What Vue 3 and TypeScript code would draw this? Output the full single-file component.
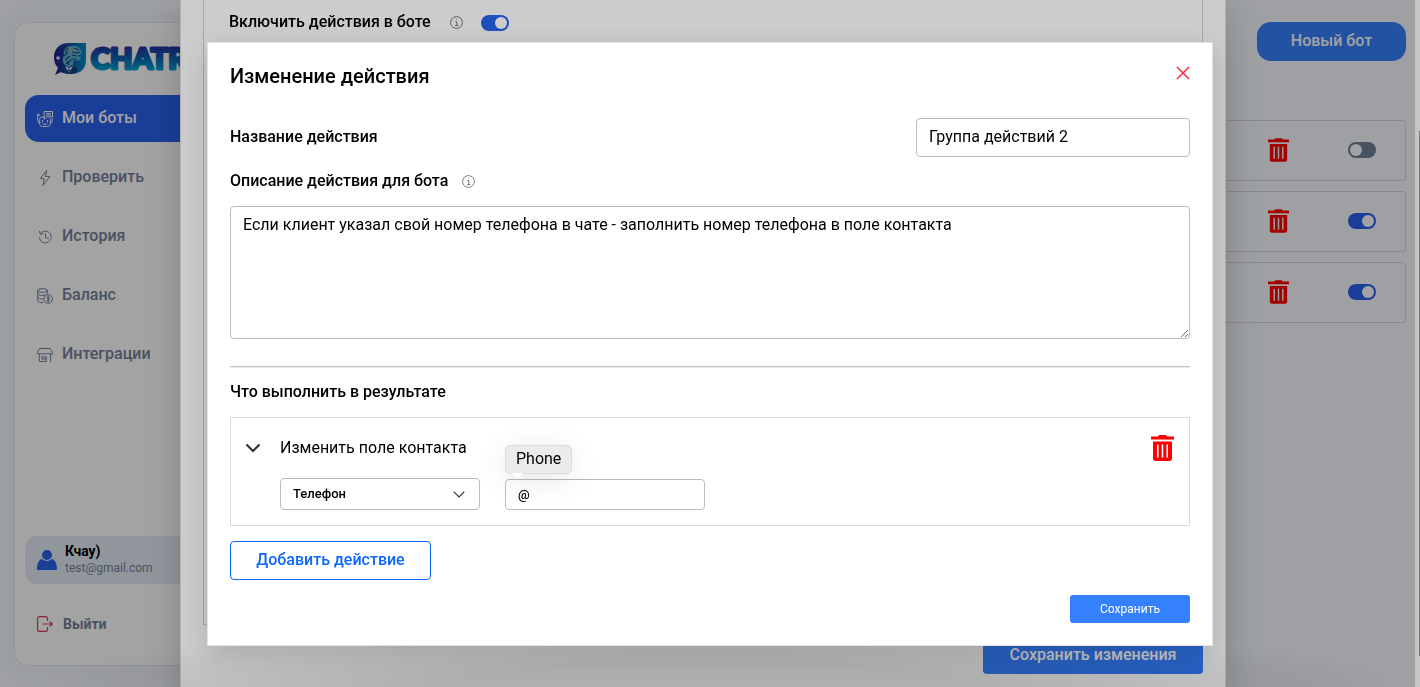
<script setup lang="ts">
import { ref } from 'vue'

interface NavItem {
  label: string
  icon: string
  active?: boolean
}

const nav: NavItem[] = [
  { label: 'Мои боты', icon: 'bot', active: true },
  { label: 'Проверить', icon: 'bolt' },
  { label: 'История', icon: 'history' },
  { label: 'Баланс', icon: 'coins' },
  { label: 'Интеграции', icon: 'store' },
]

const bots = ref<boolean[]>([false, true, true])
const actionsEnabled = ref(true)
const actionName = ref('Группа действий 2')
const description = ref('Если клиент указал свой номер телефона в чате - заполнить номер телефона в поле контакта')
const field = ref('Телефон')
const fieldValue = ref('@')
</script>

<template>
  <div class="page">
    <aside class="sidebar">
      <svg class="logo" width="190" height="36" viewBox="0 0 190 36" aria-label="CHATR">
        <defs>
          <linearGradient id="word" x1="0" y1="0" x2="0" y2="1">
            <stop offset=".15" stop-color="#2b2ca0" />
            <stop offset=".5" stop-color="#0a62b0" />
            <stop offset=".85" stop-color="#00a0d4" />
          </linearGradient>
          <linearGradient id="mark" x1="0" y1="0" x2="1" y2="0">
            <stop offset="0" stop-color="#2a1a86" />
            <stop offset=".5" stop-color="#1250a4" />
            <stop offset="1" stop-color="#0092c8" />
          </linearGradient>
        </defs>
        <path d="M15 2H33V19C33 28 27 33 18 33C14 33 10 32 8 31L2 34L5 27C2 24 1 20 1 16C1 8 7 2 15 2Z" fill="url(#mark)" />
        <path d="M11 14C10 8 14 5 19 5C23 4 26 6 28 9L29 13L23 15L28 16C28 19 25 20 21 19L20 21V25L15 26L11 23C9 20 10 17 11 14Z" fill="#5db4cd" />
        <path d="M12 11L15 7M11 15L15 11M12 19L17 15M13 23L18 19M19 14L23 15M18 18L24 18M21 7L26 9M19 11L23 12L27 11M14 20L16 24" stroke="#173c83" stroke-width="1.1" fill="none" />
        <circle cx="17.5" cy="9.5" r="1.5" fill="#ef8e48" />
        <path d="M7 31L10 25L15 27L19 24L25 28L22 32L16 33Z" fill="#173c83" />
        <path d="M12 25L16 32L20 25L16 27Z" fill="#d9f2f8" />
        <path d="M16 27L17 29L16 32L15 29Z" fill="#173c83" />
        <circle cx="5" cy="17" r="1.8" fill="#e5e5ff" />
        <text x="38" y="28" font-family="Lato, sans-serif" font-size="29" font-weight="900" fill="url(#word)" stroke="url(#word)" stroke-width="3" stroke-linejoin="round">CHATR</text>
      </svg>
      <nav class="nav">
        <a v-for="item in nav" :key="item.icon" href="#" class="nav-item" :class="{ active: item.active }">
          <svg class="nav-icon" viewBox="0 0 16 16" aria-hidden="true">
            <g v-if="item.icon === 'bot'">
              <path d="M7.5.5H15.5V6H9.5L7.5 8Z M9.5 2.5H13.5 M9.5 4.2H13.5" />
              <path d="M6.5 6H5C3.5 6 2.7 7 2.7 8.5V12.5C2.7 14.5 3.7 15.5 5.5 15.5H10.5C12.3 15.5 13.3 14.5 13.3 12.5V8M2.7 12C1.2 12 .7 11 .7 9.5V5M13.3 12C14.8 12 15.3 11 15.3 9.5V8M5.5 9.5V10.8M10.5 9.5V10.8M6 12.7C7 13.7 9 13.7 10 12.7" />
              <circle cx="1.3" cy="3.8" r=".9" />
            </g>
            <path v-else-if="item.icon === 'bolt'" d="M9.5.5L3.5 8.7H7.2L6 15.5L13 6.4H8.8Z" />
            <path v-else-if="item.icon === 'history'" d="M3.7 4.2C6 1.6 10 1.4 12.5 3.8C15 6.3 14.6 10.4 12 12.5C9.3 14.7 5.3 14.1 3.4 11.3C2.9 10.5 2.6 9.8 2.5 8.8M2.6 2.3L3.2 5.2L6.2 4.9M8.5 5V8.5L11.5 9.3" />
            <g v-else-if="item.icon === 'coins'">
              <ellipse cx="5.5" cy="2.5" rx="4.8" ry="1.9" />
              <path d="M.7 2.5V12.7C.7 14 3 14.8 6 14.6M10.3 2.5V5.5M.7 6C.7 7.3 5 8 8 7M.7 9.4C.7 10.6 3.6 11.2 6 10.9" />
              <circle cx="11.2" cy="11" r="4.4" />
              <path d="M12.7 9.3C11.5 8.5 9.8 9 10 10C10.2 11.3 12.5 10.6 12.5 12C12.5 13.3 10.7 13.5 9.7 12.7M11.2 8V14" />
            </g>
            <path v-else d="M3 1.5H13L15.5 5.5V6.8H.5V5.5ZM2.3 7V14.5H9.3V9.8H4.8V12H9M13.7 7V14.8" />
          </svg>
          <span>{{ item.label }}</span>
        </a>
      </nav>
      <div class="user">
        <svg width="20" height="20" viewBox="0 0 20 20" aria-hidden="true">
          <circle cx="10" cy="5" r="5" fill="#2a62ef" />
          <path d="M1 20C.4 20 0 19.6 0 19C0 14 2 9.5 5 9C8 11.5 12 11.5 15 9C18 9.5 20 14 20 19C20 19.6 19.6 20 19 20Z" fill="#2a62ef" />
        </svg>
        <div class="user-text">
          <strong>Кчау)</strong>
          <span>test@gmail.com</span>
        </div>
      </div>
      <a href="#" class="logout">
        <svg width="16" height="16" viewBox="0 0 16 16" fill="none" stroke="#e5384c" stroke-width="1.2" stroke-linecap="round" stroke-linejoin="round" aria-hidden="true">
          <path d="M10.5 4.5V2.5C10.5 1.3 9.7.6 8.5.6H2.6C1.4.6.6 1.3.6 2.5V13.5C.6 14.7 1.4 15.4 2.6 15.4H8.5C9.7 15.4 10.5 14.7 10.5 13.5V11.5M6 8H15.2M13 5.8L15.3 8L13 10.2" />
        </svg>
        <span>Выйти</span>
      </a>
    </aside>

    <main class="content">
      <button type="button" class="new-bot">Новый бот</button>
      <ul class="bots">
        <li v-for="(on, i) in bots" :key="i" class="bot-row">
          <button type="button" class="icon-button" aria-label="Удалить бота">
            <svg width="21" height="24" viewBox="0 0 23 26" aria-hidden="true">
              <path fill="#f00" fill-rule="evenodd" d="M0 1.5H7L8 0H15L16 1.5H23V4.5H0ZM2 6.5H21V23.5C21 25 20 26 18.5 26H4.5C3 26 2 25 2 23.5ZM6 9.5V22.5H7.6V9.5ZM10.7 9.5V22.5H12.3V9.5ZM15.4 9.5V22.5H17V9.5Z" />
            </svg>
          </button>
          <input v-model="bots[i]" type="checkbox" class="switch" aria-label="Бот включён" />
        </li>
      </ul>
    </main>
  </div>

  <div class="scrim drawer-layer">
    <section class="drawer">
      <div class="drawer-card">
        <label class="enable" for="enable-actions">Включить действия в боте</label>
        <svg class="info" viewBox="0 0 13 13" aria-hidden="true">
          <circle cx="6.5" cy="6.5" r="5.9" />
          <path d="M5.3 5.5H6.8V9.5M5 9.6H8.4M6.3 3.2H7" />
        </svg>
        <input id="enable-actions" v-model="actionsEnabled" type="checkbox" class="switch" />
      </div>
      <button type="button" class="save-changes">Сохранить изменения</button>
    </section>
  </div>
  <div class="scrollbar"><div class="thumb"></div></div>

  <div class="scrim modal-layer">
    <section class="modal" role="dialog" aria-labelledby="modal-title">
      <header class="modal-head">
        <h2 id="modal-title">Изменение действия</h2>
        <button type="button" class="icon-button" aria-label="Закрыть">
          <svg width="18" height="18" viewBox="-4 -2 18 18" aria-hidden="true">
            <path d="M1 1L13 13M13 1L1 13" stroke="#ff2d3d" stroke-width="1.5" />
          </svg>
        </button>
      </header>
      <div class="name-row">
        <label for="action-name">Название действия</label>
        <input id="action-name" v-model="actionName" type="text" class="text-input" />
      </div>
      <div class="description-label">
        <label for="action-description">Описание действия для бота</label>
        <svg class="info" viewBox="0 0 13 13" aria-hidden="true">
          <circle cx="6.5" cy="6.5" r="5.9" />
          <path d="M5.3 5.5H6.8V9.5M5 9.6H8.4M6.3 3.2H7" />
        </svg>
      </div>
      <textarea id="action-description" v-model="description" class="description"></textarea>
      <hr />
      <h3>Что выполнить в результате</h3>
      <div class="action">
        <div class="action-head">
          <button type="button" class="icon-button" aria-label="Свернуть">
            <svg width="16" height="10" viewBox="0 0 16 10" aria-hidden="true">
              <path d="M1.5 1.5L8 8L14.5 1.5" fill="none" stroke="#333" stroke-width="2.2" />
            </svg>
          </button>
          <span class="action-title">Изменить поле контакта</span>
          <button type="button" class="icon-button" aria-label="Удалить действие">
            <svg width="23" height="26" viewBox="0 0 23 26" aria-hidden="true">
              <path fill="#f00" fill-rule="evenodd" d="M0 1.5H7L8 0H15L16 1.5H23V4.5H0ZM2 6.5H21V23.5C21 25 20 26 18.5 26H4.5C3 26 2 25 2 23.5ZM6 9.5V22.5H7.6V9.5ZM10.7 9.5V22.5H12.3V9.5ZM15.4 9.5V22.5H17V9.5Z" />
            </svg>
          </button>
        </div>
        <div class="action-fields">
          <div class="select-wrap">
            <select v-model="field" class="small-input" aria-label="Поле контакта">
              <option>Телефон</option>
            </select>
            <svg class="select-arrow" width="12" height="7" viewBox="0 0 12 7" aria-hidden="true">
              <path d="M.7.7L6 6L11.3.7" fill="none" stroke="#333" stroke-width="1.2" />
            </svg>
          </div>
          <div class="value-wrap">
            <input v-model="fieldValue" type="text" class="small-input" aria-label="Значение поля" />
            <div class="tooltip" role="tooltip">Phone</div>
          </div>
        </div>
      </div>
      <button type="button" class="add">Добавить действие</button>
      <footer class="modal-foot">
        <button type="button" class="save">Сохранить</button>
      </footer>
    </section>
  </div>
</template>

<style>
body {
  margin: 0;
  overflow: hidden;
}
#app {
  font-family: Roboto, "Liberation Sans", sans-serif;
  font-size: 16px;
  line-height: 24px;
  color: #000;
}
</style>

<style scoped>
*,
*::before,
*::after {
  box-sizing: border-box;
}
button,
input,
select,
textarea {
  font: inherit;
  color: inherit;
}
button {
  padding: 0 0 2px;
  border: 0;
  cursor: pointer;
}
a {
  text-decoration: none;
}
.page {
  display: flex;
  min-height: 100vh;
  padding: 22px 14px 21px;
  background: #f8fbff;
}
.sidebar {
  display: flex;
  flex-direction: column;
  width: 250px;
  padding: 18px 10px;
  border: 1px solid #e3eaf1;
  border-radius: 14px;
  background: #fff;
  box-shadow: 0 0 24px rgba(0, 0, 0, 0.06);
}
.logo {
  display: block;
  margin: 0 0 18px 28px;
  overflow: visible;
}
.nav {
  display: grid;
  gap: 12px;
}
.nav-item {
  display: flex;
  align-items: center;
  gap: 9px;
  height: 47px;
  padding: 0 12px;
  border-radius: 14px;
  color: #748199;
  font-weight: 500;
}
.nav-item span {
  padding-bottom: 2px;
}
.nav-item.active {
  background: #2a62ef;
  color: #fff;
}
.nav-icon {
  width: 16px;
  height: 16px;
  fill: none;
  stroke: currentColor;
  stroke-width: 1;
  stroke-linecap: round;
  stroke-linejoin: round;
}
.user {
  display: flex;
  align-items: center;
  gap: 8px;
  height: 48px;
  margin-top: auto;
  padding: 0 12px;
  border-radius: 12px;
  background: #e3ecf5;
}
.user-text {
  display: grid;
  font-size: 12px;
  line-height: 17px;
  color: #748199;
}
.user-text strong {
  font-size: 14px;
  color: #000;
}
.logout {
  display: flex;
  align-items: center;
  gap: 10px;
  margin: 28px 12px 11px;
  color: #748199;
  font-size: 14px;
  font-weight: 700;
}
.content {
  flex: 1;
  display: flex;
  flex-direction: column;
  align-items: flex-end;
}
.new-bot {
  width: 149px;
  height: 39px;
  border-radius: 14px;
  background: #3881ff;
  color: #fff;
  font-weight: 500;
}
.bots {
  display: grid;
  gap: 10px;
  width: 100%;
  margin: 59px 0 0;
  padding: 0;
  list-style: none;
}
.bot-row {
  display: flex;
  align-items: center;
  justify-content: flex-end;
  gap: 59px;
  height: 61px;
  padding: 0 29px 2px 0;
  border: 1px solid #d6d9dd;
  border-radius: 3px;
}
.icon-button {
  display: flex;
  padding: 0;
  background: none;
}
.switch {
  appearance: none;
  width: 28px;
  height: 16px;
  margin: 0;
  padding: 2px;
  border-radius: 8px;
  background: #748199;
}
.switch::before {
  content: "";
  display: block;
  width: 12px;
  height: 12px;
  border-radius: 50%;
  background: #fff;
}
.switch:checked {
  background: #2a62ef;
}
.switch:checked::before {
  margin-left: auto;
}
.scrim {
  position: fixed;
  inset: 0;
  display: flex;
  background: rgba(0, 0, 0, 0.2);
}
.drawer-layer {
  padding: 0 194px 0 180px;
}
.drawer {
  flex: 1;
  display: flex;
  flex-direction: column;
  align-items: flex-end;
  padding: 0 22px 13px;
  background: #fff;
  border: solid #dedede;
  border-width: 0 1px;
  box-shadow: 0 8px 36px rgba(0, 0, 0, 0.2);
}
.drawer-card {
  flex: 1;
  display: flex;
  align-items: flex-start;
  align-self: stretch;
  padding: 10px 25px;
  border: 1px solid #d2d2d2;
  border-top: 0;
  margin-bottom: 10px;
}
.enable {
  font-weight: 500;
}
.info {
  width: 13px;
  height: 13px;
  margin: 6px 18px 0 19px;
  fill: none;
  stroke: #777;
  stroke-width: 1;
}
.drawer-card .switch {
  margin-top: 5px;
}
.save-changes {
  width: 220px;
  height: 39px;
  padding: 0;
  border-radius: 4px;
  background: #3580ff;
  color: #fff;
  font-weight: 500;
}
.scrollbar {
  position: fixed;
  inset: 0 0 0 auto;
  width: 5px;
  padding: 131px 0 31px 4px;
  background: #f8f8f8;
}
.thumb {
  height: 100%;
  background: #999;
}
.modal-layer {
  align-items: flex-start;
  padding: 42px 207px;
  background:
    radial-gradient(ellipse 48% 64px at 50% 100%, rgba(0, 0, 0, 0.14) 40%, transparent),
    rgba(0, 0, 0, 0.2);
}
.modal {
  flex: 1;
  padding: 21px 22px 22px;
  border: 1px solid #e2e2e2;
  background: #fff;
  box-shadow: 0 8px 28px rgba(0, 0, 0, 0.16);
}
.modal-head {
  display: flex;
  align-items: flex-start;
  justify-content: space-between;
  margin-bottom: 30px;
}
h2,
h3 {
  margin: 0;
  font-size: 16px;
  font-weight: 500;
}
h2 {
  font-size: 20px;
}
.name-row {
  display: flex;
  align-items: center;
  justify-content: space-between;
  font-weight: 500;
}
.name-row label {
  padding-bottom: 2px;
}
.text-input {
  width: 274px;
  height: 39px;
  padding: 0 12px 2px;
  border: 1px solid #bbb;
  border-radius: 4px;
  background: #fff;
  font-weight: 400;
}
.description-label {
  display: flex;
  margin: 12px 0 13px;
  font-weight: 500;
}
.description-label .info {
  margin: 6px 0 0 14px;
}
.description {
  display: block;
  width: 100%;
  height: 133px;
  padding: 6px 12px;
  border: 1px solid #bbb;
  border-radius: 4px;
}
hr {
  height: 2px;
  margin: 27px 0 12px;
  border: solid;
  border-width: 1px 0;
  border-color: #c4c4c4 transparent #ebebeb;
}
.action {
  margin: 13px 0 15px;
  padding: 17px 15px 15px 14px;
  border: 1px solid #d9d9d9;
}
.action-head {
  display: flex;
  align-items: center;
  height: 26px;
}
.action-title {
  flex: 1;
  margin-left: 19px;
}
.action-fields {
  display: flex;
  gap: 25px;
  margin: 17px 0 0 35px;
}
.select-wrap,
.value-wrap {
  position: relative;
  display: flex;
  width: 200px;
}
.small-input {
  appearance: none;
  width: 100%;
  height: 32px;
  padding: 0 12px;
  border: 1px solid #bbb;
  border-radius: 4px;
  background: #fff;
  font-size: 13px;
  font-weight: 500;
}
.value-wrap {
  padding-top: 1px;
}
.value-wrap .small-input {
  height: 31px;
}
.select-arrow {
  position: absolute;
  top: 13px;
  right: 15px;
}
.tooltip {
  position: absolute;
  bottom: 36px;
  left: 0;
  padding: 1px 10px 2px;
  border: 1px solid #dcdcdc;
  border-radius: 5px;
  background: #ebebeb;
  box-shadow: 0 6px 30px rgba(0, 0, 0, 0.1);
}
.tooltip::after {
  content: "";
  position: absolute;
  top: 100%;
  left: 5px;
  border: 6px solid transparent;
  border-top-color: #fff;
  border-bottom: 0;
}
.add {
  width: 201px;
  height: 39px;
  border: 1px solid #0d67ff;
  border-radius: 4px;
  background: #fff;
  color: #0d67ff;
  font-weight: 500;
}
.modal-foot {
  display: flex;
  justify-content: flex-end;
  margin-top: 15px;
}
.save {
  width: 120px;
  height: 28px;
  padding: 0;
  border-radius: 3px;
  background: #3580ff;
  color: #fff;
  font-size: 12px;
}
</style>
